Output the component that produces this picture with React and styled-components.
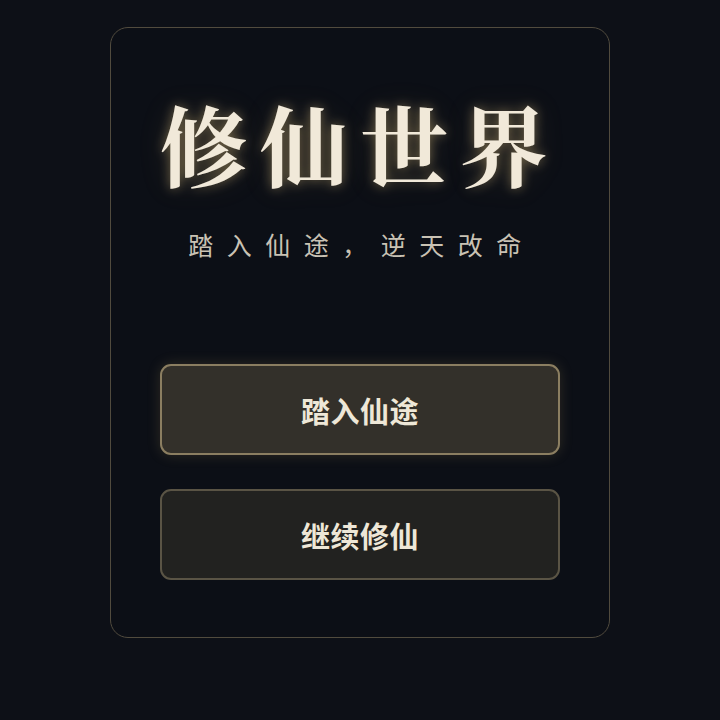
import React from "react";
import styled, { createGlobalStyle } from "styled-components";

const Global = createGlobalStyle`
  html, body { margin: 0; padding: 0; background: #0d1017; }
  body { font-family: "Noto Sans CJK SC", "Noto Sans", sans-serif; }
`;

const Page = styled.div`
  min-height: 720px;
  display: flex;
  justify-content: center;
  align-items: flex-start;
  padding-top: 27px;
  box-sizing: border-box;
`;

const Card = styled.div`
  width: 500px;
  box-sizing: border-box;
  border: 1.5px solid #514b3e;
  border-radius: 18px;
  background: #0c0f16;
  padding: 56px 49px 57px;
  display: flex;
  flex-direction: column;
  align-items: stretch;
`;

const Title = styled.h1`
  margin: 0;
  align-self: center;
  white-space: nowrap;
  text-align: center;
  font-family: "Noto Serif CJK SC", "Noto Serif", "Noto Sans CJK SC", serif;
  font-size: 88px;
  line-height: 116px;
  font-weight: 700;
  letter-spacing: 12px;
  color: #f1e9d9;
  text-shadow: 0 0 12px rgba(230, 200, 130, 0.45), 0 0 30px rgba(200, 170, 100, 0.15);
`;

const Subtitle = styled.p`
  margin: 26px 0 0;
  text-align: center;
  white-space: nowrap;
  font-size: 25px;
  line-height: 36px;
  letter-spacing: 13.5px;
  padding-left: 3px;
  color: #c9c2b4;
`;

const Actions = styled.div`
  margin-top: 102px;
  display: flex;
  flex-direction: column;
  gap: 34px;
`;

const Button = styled.button`
  height: 91px;
  border-radius: 11px;
  border: 2px solid ${(p) => (p.$primary ? "#8b7e61" : "#5a5445")};
  background: ${(p) => (p.$primary ? "#33302a" : "#222220")};
  box-shadow: ${(p) => (p.$primary ? "0 0 14px rgba(200, 170, 100, 0.18)" : "none")};
  color: #eee7d7;
  font-family: "Noto Sans CJK SC", sans-serif;
  font-size: 29px;
  letter-spacing: 0.5px;
  font-weight: 700;
  cursor: pointer;
`;

export default function App() {
  return (
    <>
      <Global />
      <Page>
        <Card>
          <Title>修仙世界</Title>
          <Subtitle>踏入仙途，逆天改命</Subtitle>
          <Actions>
            <Button $primary>踏入仙途</Button>
            <Button>继续修仙</Button>
          </Actions>
        </Card>
      </Page>
    </>
  );
}
